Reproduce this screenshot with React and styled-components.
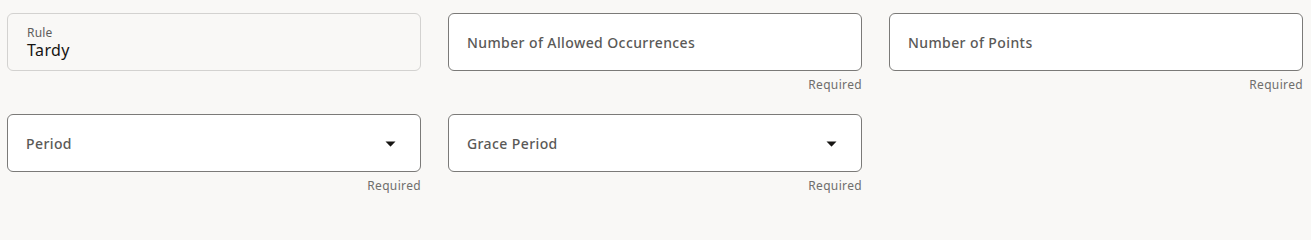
import React from 'react';
import styled, { createGlobalStyle } from 'styled-components';

const GlobalStyle = createGlobalStyle`
  body {
    margin: 0;
    background: #f9f8f6;
    font-family: "Noto Sans", "Open Sans", sans-serif;
  }
`;

const Form = styled.div`
  display: grid;
  grid-template-columns: repeat(3, 414px);
  column-gap: 27px;
  row-gap: 20px;
  padding: 13px 8px 0 7px;
`;

const FieldWrap = styled.div`
  display: flex;
  flex-direction: column;
`;

const Box = styled.div`
  box-sizing: border-box;
  height: 58px;
  display: flex;
  align-items: center;
  padding: 1px 24px 0 18px;
  border: 1px solid ${(p) => (p.readOnly ? '#d3d2d0' : '#7b7a78')};
  border-radius: 6px;
  background: ${(p) => (p.readOnly ? '#f9f8f6' : '#ffffff')};
`;

const Placeholder = styled.span`
  flex: 1;
  font-size: 14px;
  font-weight: 500;
  letter-spacing: 0.4px;
  color: #5a5957;
`;

const Stack = styled.div`
  display: flex;
  flex-direction: column;
  padding-left: 1px;
`;

const SmallLabel = styled.span`
  font-size: 12px;
  line-height: 14px;
  letter-spacing: 0.2px;
  color: #5e5d5b;
`;

const Value = styled.span`
  font-size: 16px;
  line-height: 20px;
  letter-spacing: 0.4px;
  color: #161513;
`;

const Helper = styled.span`
  align-self: flex-end;
  margin-top: 5px;
  font-size: 12px;
  line-height: 18px;
  letter-spacing: 0.35px;
  color: #6f6e6c;
`;

const Caret = () => (
  <svg width="11" height="6" viewBox="0 0 11 6" style={{ marginTop: 1 }}>
    <path d="M0.5 0.5h10L5.9 5.3a0.6 0.6 0 0 1-0.8 0z" fill="#161513" />
  </svg>
);

const Field = ({ label, select, required }) => (
  <FieldWrap>
    <Box>
      <Placeholder>{label}</Placeholder>
      {select && <Caret />}
    </Box>
    {required && <Helper>Required</Helper>}
  </FieldWrap>
);

export default function App() {
  return (
    <>
      <GlobalStyle />
      <Form>
        <FieldWrap>
          <Box readOnly>
            <Stack>
              <SmallLabel>Rule</SmallLabel>
              <Value>Tardy</Value>
            </Stack>
          </Box>
        </FieldWrap>
        <Field label="Number of Allowed Occurrences" required />
        <Field label="Number of Points" required />
        <Field label="Period" select required />
        <Field label="Grace Period" select required />
      </Form>
    </>
  );
}
